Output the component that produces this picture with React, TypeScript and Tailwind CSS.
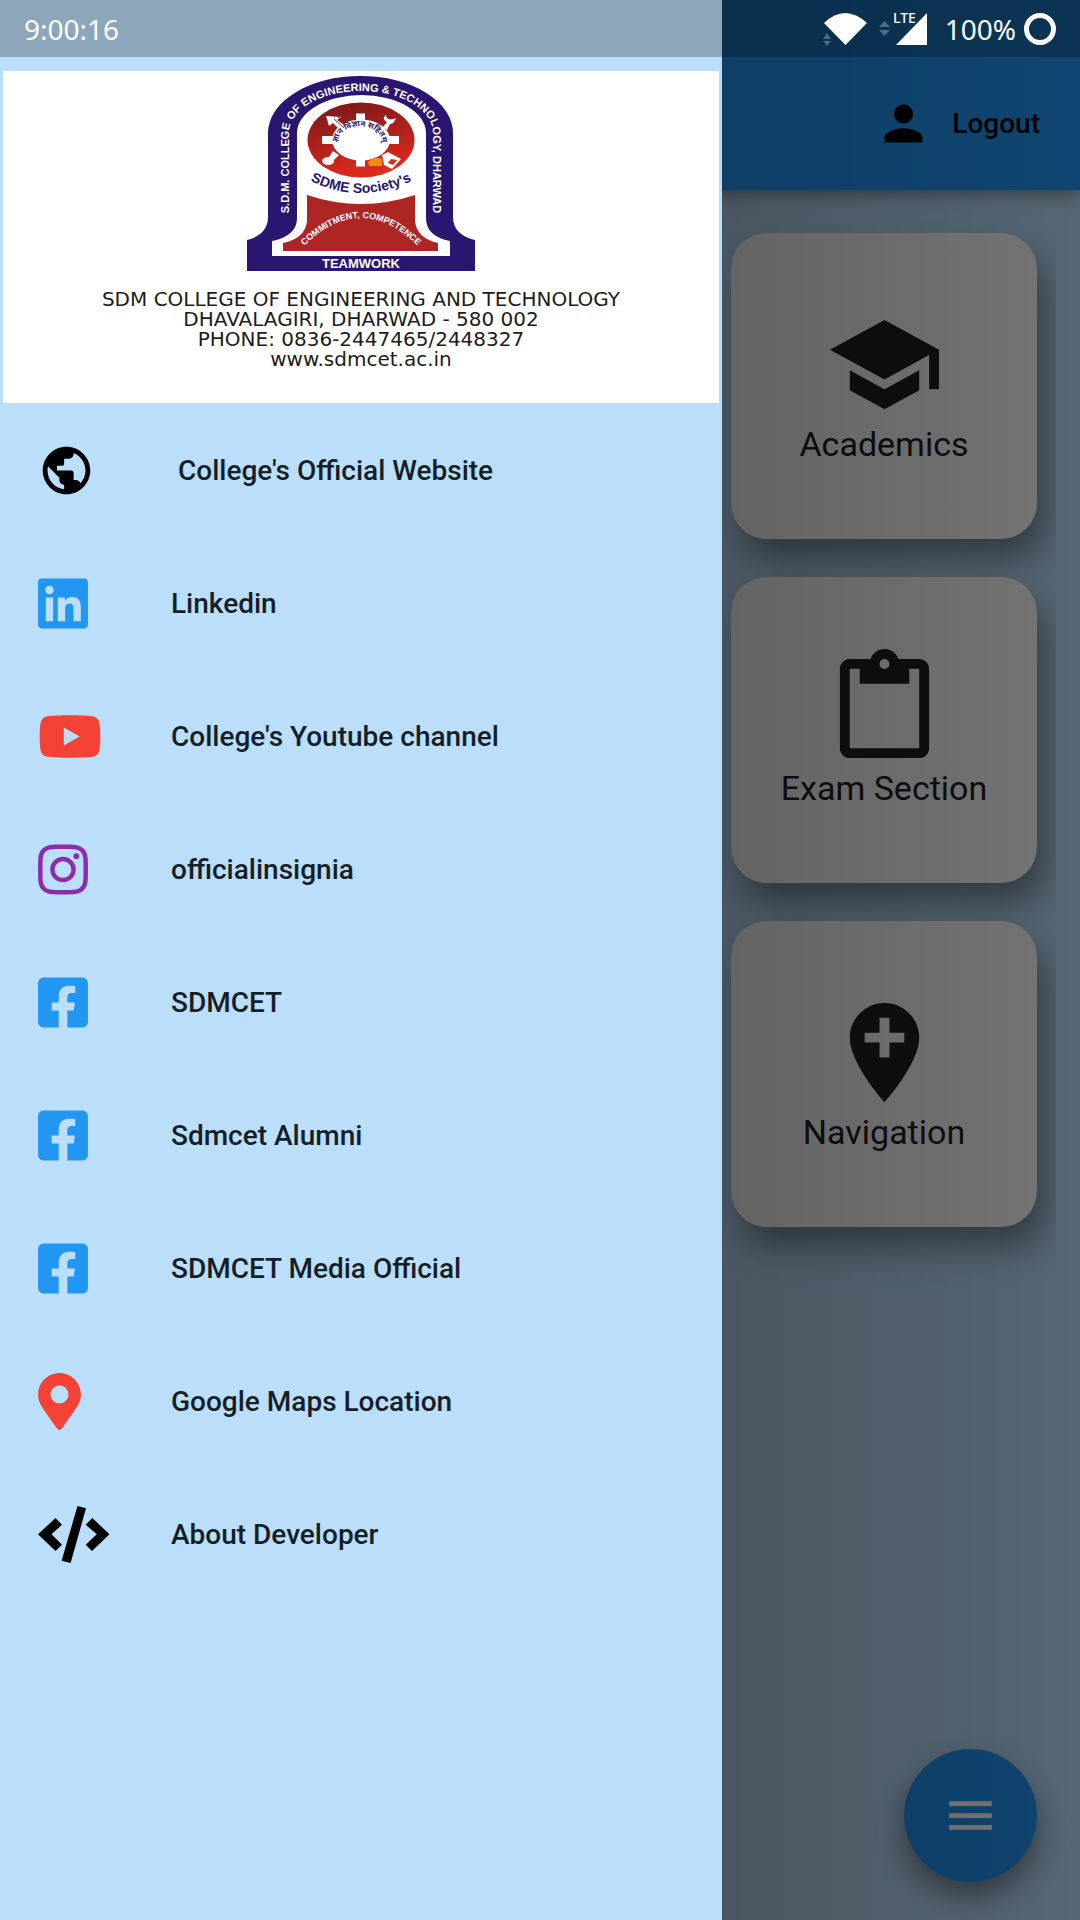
import type { ReactNode } from 'react';
import { FaFacebookSquare, FaInstagram, FaLinkedin, FaMapMarkerAlt, FaYoutube } from 'react-icons/fa';
import { MdAddLocation, MdContentPaste, MdMenu, MdPerson, MdPublic, MdSchool } from 'react-icons/md';

const CodeIcon = () => (
    <svg viewBox="0 0 72 57" className="h-[57px] w-[72px] text-black" fill="currentColor">
        <path d="M0 28.3 17.5 12 24 18.7 13.5 28.3 24 38.7 17.5 45Z" />
        <path d="M39.5 0 48 2.3 32.6 57 23.6 54.7Z" />
        <path d="M54.3 12 71.5 28.3 54 45 47.7 38.7 58.8 28.3 47.7 18.7Z" />
    </svg>
);

const links = [
    { label: " College's Official Website", icon: <MdPublic className="size-[57px] text-black" /> },
    { label: 'Linkedin', icon: <FaLinkedin className="h-[57px] w-[50px] text-[#2196f3]" /> },
    { label: "College's Youtube channel", icon: <FaYoutube className="h-[57px] w-16 text-[#f44336]" /> },
    { label: 'officialinsignia', icon: <FaInstagram className="h-[57px] w-[50px] text-[#8e2bab]" /> },
    { label: 'SDMCET', icon: <FaFacebookSquare className="h-[57px] w-[50px] text-[#2196f3]" /> },
    { label: 'Sdmcet Alumni', icon: <FaFacebookSquare className="h-[57px] w-[50px] text-[#2196f3]" /> },
    { label: 'SDMCET Media Official', icon: <FaFacebookSquare className="h-[57px] w-[50px] text-[#2196f3]" /> },
    { label: 'Google Maps Location', icon: <FaMapMarkerAlt className="h-[57px] w-[43px] text-[#f44336]" /> },
    { label: 'About Developer', icon: <CodeIcon /> },
];

const Emblem = () => (
    <svg viewBox="0 0 228 197" className="h-[197px] w-[228px]" role="img" aria-label="SDMCET emblem">
        <defs>
            <linearGradient id="disc" x1="0" y1="0" x2="0.3" y2="1">
                <stop offset="0" stopColor="#741818" />
                <stop offset="0.45" stopColor="#a31f1c" />
                <stop offset="1" stopColor="#dc2a1c" />
            </linearGradient>
            <path id="arch" d="M42 154V58A72 42 0 0 1 186 58V154" />
            <path id="smile" d="M56 102Q114 134 172 102" />
            <path id="hill" d="M56 172Q114 114 172 172" />
            <path id="gearText" d="M98 79A22 16 0 1 1 128 79" />
        </defs>
        <path fill="#2a1570" d="M0 196V165C12 162 21 155 21 142V58A92.5 57 0 0 1 206 58V142C206 155 215 162 228 165V196Z" />
        <path fill="#fff" d="M25 181V166C40 163 50 156 50 143V58A64.5 38 0 0 1 179 58V143C179 156 188 163 203 166V181Z" />
        <path fill="#ad2624" d="M60 120Q114 138 168 120V146C169 158 178 165 191 168V176H36V168C50 165 59 158 60 146Z" />
        <ellipse cx="114" cy="65" rx="53.5" ry="37.5" fill="url(#disc)" />
        <g fill="#fff">
            <ellipse cx="114" cy="65" rx="29" ry="20.5" />
            <path d="M109 38.5h9v8h-9zM109 83h9v8.5h-9zM75 61h11v8H75zM141 61h11v8h-11z" />
            <path d="M79 41 94 42 90 45 97 50 92 54 86 48 82 51Z" />
            <path d="M86 76 92 80 87 85A6 4 0 1 1 82 82Z" />
            <path d="M136 52 140 47C136 45 136 42 139 40 139 44 143 46 149 43 147 48 145 49 143 49L140 55Z" />
            <path fillRule="evenodd" d="M135 80 141 77 154 84 145 94 137 90ZM144 84 150 85 146 90 141 88Z" />
        </g>
        <path d="M87 44 97 53M91 42 99 50" stroke="#a31f1c" />
        <path d="M121 87 128 82 135 84V91H122Z" fill="#ef8a12" />
        <g fill="#fff" fontFamily="'Liberation Sans', sans-serif" fontWeight="bold" textAnchor="middle">
            <text fontSize="11">
                <textPath href="#arch" startOffset="50%">S.D.M. COLLEGE OF ENGINEERING &amp; TECHNOLOGY, DHARWAD</textPath>
            </text>
            <text fontSize="14" fill="#2a1570">
                <textPath href="#smile" startOffset="50%">SDME Society's</textPath>
            </text>
            <text fontSize="9">
                <textPath href="#hill" startOffset="50%">COMMITMENT, COMPETENCE</textPath>
            </text>
            <text fontSize="8" fill="#2a1570" fontFamily="'Noto Sans', sans-serif">
                <textPath href="#gearText" startOffset="50%">ज्ञान विज्ञान सहितम्</textPath>
            </text>
            <text x="114" y="193" fontSize="13">TEAMWORK</text>
        </g>
    </svg>
);

const StatusBar = () => (
    <div className="absolute inset-x-0 top-0 z-30 flex h-[57px] items-center justify-between bg-black/25 px-6 font-['Noto_Sans',sans-serif] text-[28px] text-white">
        <span>9:00:16</span>
        <div className="flex items-center">
            <svg viewBox="0 0 106 34" className="mr-4 h-[34px] w-[106px] overflow-visible" fill="#fff">
                <path d="M1 11Q22 -9 44 11L22.500 33Z" />
                <path d="M104 1V33H73Z" />
                <g fill="#4f6b84">
                    <path d="M0 27 4 21 8 27ZM0 29H8L4 34Z" />
                    <path d="M56 15 61.500 9 67 15ZM56 18H67L61.500 24Z" />
                </g>
                <text x="70" y="11" fontSize="14" fontWeight="500" fontFamily="'Noto Sans', sans-serif">LTE</text>
            </svg>
            <span>100%</span>
            <span className="ml-2 size-8 rounded-full border-[5px] border-white" />
        </div>
    </div>
);

const Card = ({ icon, label }: { icon: ReactNode; label: string }) => (
    <button className="flex size-[306px] flex-col items-center justify-center rounded-[36px] bg-white pb-1 text-[34px] leading-10 text-[#212121] shadow-[10px_22px_34px_-2px_rgba(0,0,0,0.4)]">
        {icon}
        {label}
    </button>
);

const Drawer = () => (
    <aside className="absolute inset-y-0 left-0 z-20 flex w-[66.85%] flex-col bg-[#bbdefb] pt-[71px]">
        <div className="mx-[3px] mb-px flex h-[332px] flex-col items-center bg-white pt-1">
            <Emblem />
            <p className="mt-[17px] text-center font-['DejaVu_Sans',sans-serif] text-[20px] leading-5 whitespace-nowrap text-[#1c1c1c]">
                SDM COLLEGE OF ENGINEERING AND TECHNOLOGY
                <br />
                DHAVALAGIRI, DHARWAD - 580 002
                <br />
                PHONE: 0836-2447465/2448327
                <br />
                www.sdmcet.ac.in
            </p>
        </div>
        <nav>
            {links.map((link) => (
                <a key={link.label} href="#" className="flex h-[133px] items-center pl-[38px] text-[28px] font-medium text-[#161f27]">
                    <span className="w-[133px]">{link.icon}</span>
                    <span className="whitespace-pre">{link.label}</span>
                </a>
            ))}
        </nav>
    </aside>
);

const App = () => {
    return (
        <div className="relative flex min-h-screen flex-col overflow-hidden bg-[#bbdefb] font-[Roboto,sans-serif]">
            <StatusBar />
            <header className="flex h-[190px] items-center justify-end bg-[#2196f3] pr-10 pt-[57px] shadow-[0_4px_16px_rgba(0,0,0,0.4)]">
                <button className="flex items-center gap-5 text-[28px] font-medium text-black">
                    <MdPerson className="size-[57px]" />
                    Logout
                </button>
            </header>
            <main className="mr-6 flex flex-col items-end gap-[38px] overflow-hidden pb-16 pr-[19px] pt-[43px]">
                <Card icon={<MdSchool className="size-[119px]" />} label="Academics" />
                <Card icon={<MdContentPaste className="size-[119px]" />} label="Exam Section" />
                <Card icon={<MdAddLocation className="size-[119px]" />} label="Navigation" />
            </main>
            <button
                aria-label="Menu"
                className="absolute bottom-[38px] right-[43px] flex size-[133px] items-center justify-center rounded-full bg-[#2196f3] text-white shadow-[0_14px_28px_rgba(0,0,0,0.4)]"
            >
                <MdMenu className="size-[57px]" />
            </button>
            {/* scrim, a little darker next to the drawer */}
            <div className="absolute inset-0 z-10 flex flex-col items-end bg-black/54">
                <div className="h-[190px] w-1/3 bg-linear-to-r from-black/8 to-transparent" />
                <div className="w-1/3 grow bg-linear-to-r from-black/15 to-transparent" />
            </div>
            <Drawer />
        </div>
    );
};

export default App;
